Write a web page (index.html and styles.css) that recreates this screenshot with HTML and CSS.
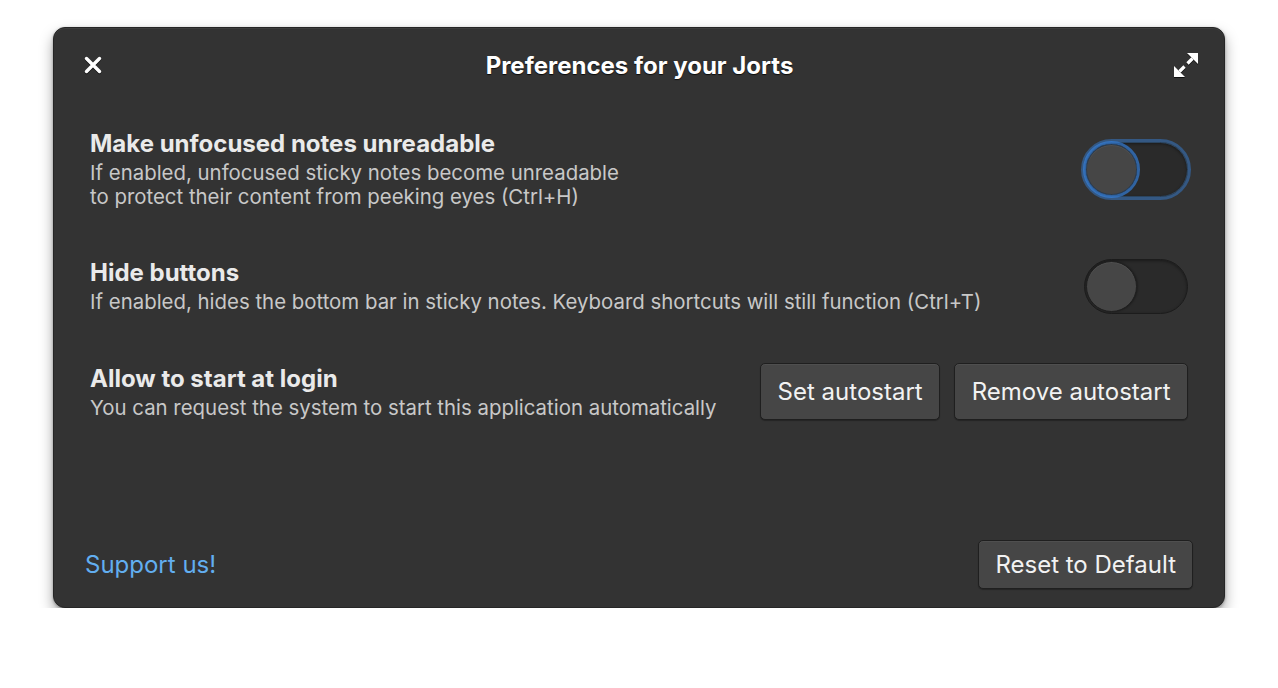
FILE: index.html
```html
<!DOCTYPE html>
<html>
<head>
<meta charset="utf-8">
<link rel="stylesheet" href="styles.css">
</head>
<body>
<div class="window">
  <header class="header">
    <button class="icon-btn close" aria-label="Close">
      <svg width="20" height="20" viewBox="0 0 20 20"><path d="M3.5 3.5 L16.5 16.5 M16.5 3.5 L3.5 16.5" stroke="#fff" stroke-width="3.4" stroke-linecap="round" fill="none"/></svg>
    </button>
    <h1 class="title">Preferences for your Jorts</h1>
    <button class="icon-btn maximize" aria-label="Maximize">
      <svg width="26" height="26" viewBox="0 0 26 26"><path d="M14 1 H25 V12 Z" fill="#fff"/><path d="M1 25 V14 L12 25 Z" fill="#fff"/><path d="M19.5 6.5 L14.5 11.5 M11.5 14.5 L6.5 19.5" stroke="#fff" stroke-width="3.2" fill="none"/></svg>
    </button>
  </header>
  <main class="content">
    <div class="row row-1">
      <div class="text">
        <div class="label">Make unfocused notes unreadable</div>
        <div class="desc">If enabled, unfocused sticky notes become unreadable<br>to protect their content from peeking eyes (Ctrl+H)</div>
      </div>
      <div class="switch focused"><span class="knob"></span></div>
    </div>
    <div class="row row-2">
      <div class="text">
        <div class="label">Hide buttons</div>
        <div class="desc">If enabled, hides the bottom bar in sticky notes. Keyboard shortcuts will still function (Ctrl+T)</div>
      </div>
      <div class="switch"><span class="knob"></span></div>
    </div>
    <div class="row row-3">
      <div class="text">
        <div class="label">Allow to start at login</div>
        <div class="desc">You can request the system to start this application automatically</div>
      </div>
      <div class="buttons">
        <button class="btn big">Set autostart</button>
        <button class="btn big">Remove autostart</button>
      </div>
    </div>
  </main>
  <footer class="footer">
    <a class="link" href="#">Support us!</a>
    <button class="btn reset">Reset to Default</button>
  </footer>
</div>
</body>
</html>
```
FILE: styles.css
```css
* { box-sizing: border-box; }
html, body { margin: 0; padding: 0; background: #ffffff; }
body {
  font-family: Inter, "Noto Sans", sans-serif;
  padding: 27px 0 0 53px;
}
.window {
  width: 1172px;
  height: 581px;
  background: #333333;
  border-radius: 12px;
  border: 1px solid #262626;
  box-shadow: 0 7px 14px rgba(0,0,0,0.35), 0 1px 3px rgba(0,0,0,0.3), inset 0 1px 0 rgba(255,255,255,0.05);
  display: flex;
  flex-direction: column;
  color: #fff;
}
.header {
  height: 74px;
  display: flex;
  align-items: center;
  justify-content: space-between;
  padding: 0 24px 0 25px;
}
.icon-btn {
  background: none;
  border: none;
  padding: 0;
  width: 28px;
  height: 28px;
  display: flex;
  align-items: center;
  justify-content: center;
  filter: drop-shadow(0 1px 0 rgba(0,0,0,0.7));
}
.title {
  margin: 0;
  font-size: 24px;
  font-weight: 700;
  color: #fff;
  text-shadow: 0 1px 1px rgba(0,0,0,0.8);
  line-height: 29px;
}
.content {
  flex: 1;
  display: flex;
  flex-direction: column;
  padding: 27px 36px 0 36px;
}
.row {
  display: flex;
  align-items: center;
  justify-content: space-between;
}
.row-2 { margin-top: 49px; }
.row-3 { margin-top: 49px; }
.label {
  font-size: 24px;
  font-weight: 700;
  color: #eaeaea;
  line-height: 29px;
}
.desc {
  font-size: 20.4px;
  color: #c8c8c8;
  line-height: 24px;
  margin-top: 3px;
}
.switch {
  position: relative;
  width: 104px;
  height: 55px;
  border-radius: 28px;
  background: #2a2a2a;
  border: 1px solid #1c1c1c;
  box-shadow: inset 0 1px 3px rgba(0,0,0,0.4);
}
.switch.focused {
  outline: 3px solid rgba(53,132,228,0.45);
  outline-offset: 0;
  border-color: #2b4560;
}
.knob {
  position: absolute;
  left: 1px;
  top: 1px;
  width: 51px;
  height: 51px;
  border-radius: 50%;
  background: #464646;
  border: 1px solid #1f1f1f;
  box-shadow: inset 0 1px 0 rgba(255,255,255,0.06), 1px 0 2px rgba(0,0,0,0.3);
}
.switch.focused .knob {
  outline: 3px solid rgba(53,132,228,0.65);
  border-color: #2e3e50;
}
.buttons {
  display: flex;
  gap: 14px;
}
.btn {
  font-family: Inter, "Noto Sans", sans-serif;
  background: #464646;
  color: #f2f2f2;
  border: 1px solid #1f1f1f;
  border-radius: 5px;
  box-shadow: inset 0 1px 0 rgba(255,255,255,0.05), 0 1px 1px rgba(0,0,0,0.3);
}
.btn.big {
  height: 57px;
  font-size: 24px;
  padding: 0 16.5px;
}
.footer {
  display: flex;
  align-items: center;
  justify-content: space-between;
  padding: 0 31px 18px 31px;
}
.link {
  color: #62aef0;
  text-decoration: none;
  font-size: 24px;
}
.btn.reset {
  height: 49px;
  font-size: 24px;
  padding: 0 16px;
}
```
